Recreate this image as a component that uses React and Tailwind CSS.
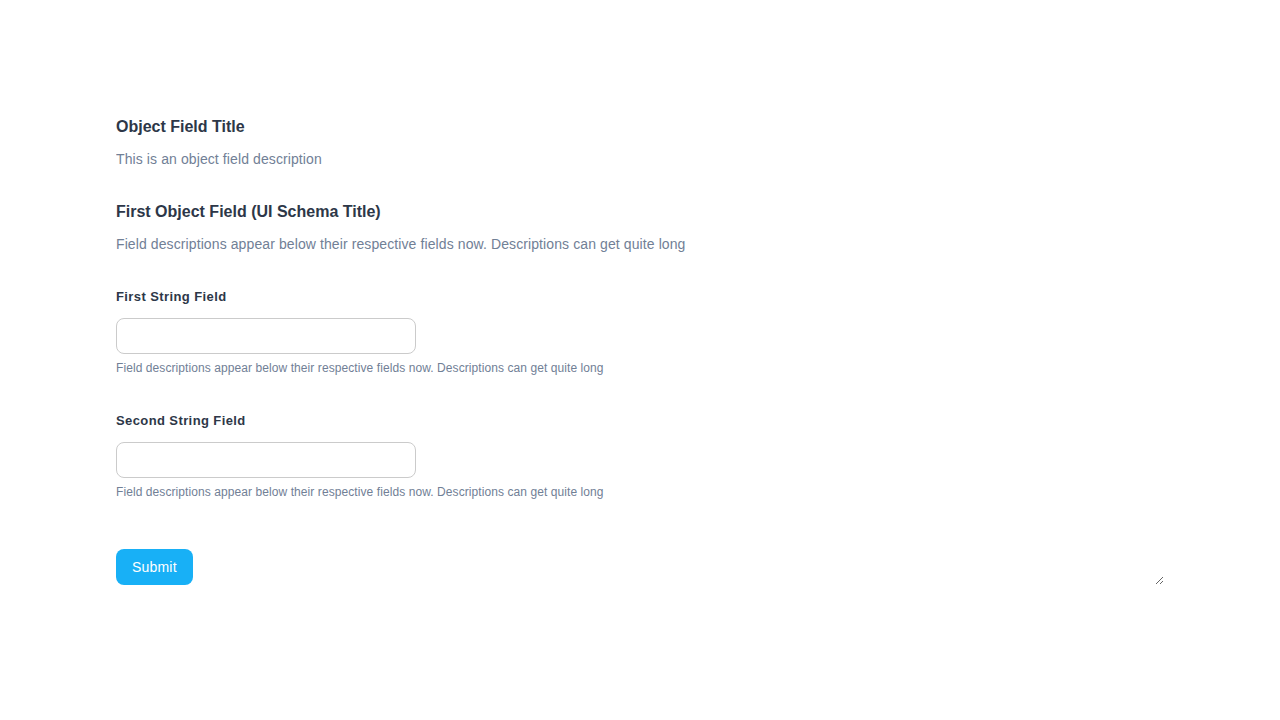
import React from 'react';

const HELP = 'Field descriptions appear below their respective fields now. Descriptions can get quite long';

// Single string input with label and help text
const StringField = ({ id, label, className = '' }) => (
  <div className={className}>
    <label htmlFor={id} className="block text-[13px] leading-5 font-bold text-[#2d3748] tracking-[0.4px]">
      {label}
    </label>
    <input
      id={id}
      type="text"
      className="block mt-[11px] w-[300px] h-9 px-3 rounded-lg border border-[#cbcbcb] bg-white text-sm outline-none"
    />
    <p className="mt-1.5 text-xs leading-4 text-[#718096] tracking-[0.08px]">{HELP}</p>
  </div>
);

export default function App() {
  return (
    <div className="min-h-screen bg-white font-['Liberation_Sans',Arial,sans-serif] px-[116px] pt-[115px]">
      <form
        onSubmit={(e) => e.preventDefault()}
        className="resize overflow-auto w-full"
      >
        {/* Object header */}
        <h2 className="text-base leading-6 font-bold text-[#2d3748]">Object Field Title</h2>
        <p className="mt-[10px] text-sm leading-5 text-[#718096] tracking-[0.1px]">This is an object field description</p>

        {/* Nested object */}
        <h3 className="mt-[31px] text-base leading-6 font-bold text-[#2d3748]">First Object Field (UI Schema Title)</h3>
        <p className="mt-[10px] text-sm leading-5 text-[#718096] tracking-[0.1px]">{HELP}</p>

        <StringField id="first" label="First String Field" className="mt-[33px]" />
        <StringField id="second" label="Second String Field" className="mt-[35px]" />

        <button
          type="submit"
          className="block mt-[49px] h-9 px-4 rounded-lg bg-[#18b0f6] text-white text-sm tracking-[0.2px]"
        >
          Submit
        </button>
      </form>
    </div>
  );
}
